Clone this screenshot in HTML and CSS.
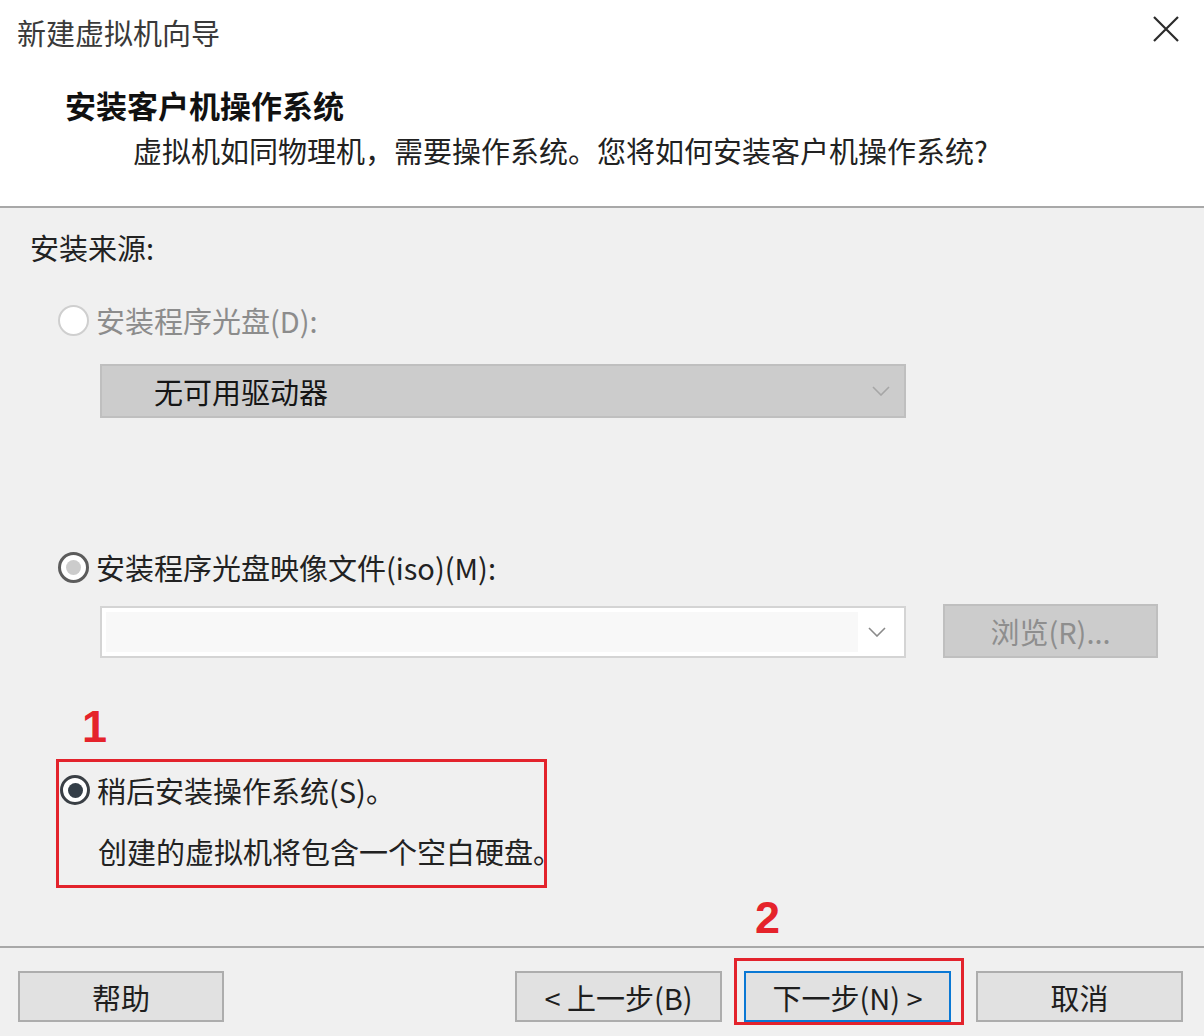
FILE: index.html
```html
<!DOCTYPE html>
<html lang="zh-CN">
<head>
<meta charset="utf-8">
<title>新建虚拟机向导</title>
<link rel="stylesheet" href="styles.css">
</head>
<body>
<div class="dialog">
  <header class="header">
    <div class="titlebar">
      <span class="title">新建虚拟机向导</span>
      <svg class="close" width="28" height="28" viewBox="0 0 28 28"><path d="M2 2L26 26M26 2L2 26" stroke="#2b2b2b" stroke-width="2.2" fill="none"/></svg>
    </div>
    <div class="heading">安装客户机操作系统</div>
    <div class="subtitle">虚拟机如同物理机，需要操作系统。您将如何安装客户机操作系统?</div>
  </header>

  <main class="content">
    <div class="label">安装来源:</div>

    <div class="option disabled"><span class="radio radio-off"></span><span>安装程序光盘(D):</span></div>
    <div class="select">
      <span>无可用驱动器</span>
      <svg class="chev" width="18" height="10" viewBox="0 0 18 10"><path d="M1 1L9 9L17 1" stroke="#a6a6a6" stroke-width="1.6" fill="none"/></svg>
    </div>

    <div class="option option-iso"><span class="radio radio-dim"></span><span>安装程序光盘映像文件(iso)(M):</span></div>
    <div class="iso-row">
      <div class="combo">
        <div class="combo-field"></div>
        <svg class="chev" width="18" height="10" viewBox="0 0 18 10"><path d="M1 1L9 9L17 1" stroke="#8a8a8a" stroke-width="1.6" fill="none"/></svg>
      </div>
      <div class="browse">浏览(R)...</div>
    </div>

    <div class="mark mark-1">1</div>
    <div class="callout">
      <div class="option"><span class="radio radio-on"></span><span>稍后安装操作系统(S)。</span></div>
      <div class="desc">创建的虚拟机将包含一个空白硬盘。</div>
    </div>
    <div class="mark mark-2">2</div>
  </main>

  <footer class="footer">
    <div class="btn btn-help">帮助</div>
    <div class="btn">&lt; 上一步(B)</div>
    <div class="btn btn-next">下一步(N) &gt;</div>
    <div class="btn">取消</div>
  </footer>
</div>
</body>
</html>
```

FILE: styles.css
```css
* { box-sizing: border-box; }

html, body {
  margin: 0;
  padding: 0;
  background: #f0f0f0;
}

body {
  font-family: "Noto Sans CJK SC", "Noto Sans", sans-serif;
  font-size: 29px;
  color: #1e1e1e;
}

.dialog {
  width: 1204px;
  height: 1036px;
  display: flex;
  flex-direction: column;
  overflow: hidden;
}

/* header */
.header {
  height: 208px;
  background: #ffffff;
  border-bottom: 2px solid #a8a8a8;
  flex: none;
}

.titlebar {
  display: flex;
  justify-content: space-between;
  align-items: center;
  padding: 12px 24px 0 17px;
  height: 52px;
}

.title {
  line-height: 40px;
  color: #3a3a3a;
}

.close {
  display: block;
  margin-top: -6px;
}

.heading {
  margin: 33px 0 0 65px;
  font-size: 31px;
  font-weight: 700;
  line-height: 40px;
  color: #111;
}

.subtitle {
  margin: 5px 0 0 133px;
  line-height: 40px;
  color: #222;
}

/* content */
.content {
  height: 738px;
  flex: none;
  padding-top: 19px;
}

.label {
  margin-left: 30px;
  line-height: 40px;
  color: #222;
}

.option {
  display: flex;
  align-items: center;
  gap: 7px;
  height: 40px;
  line-height: 40px;
  margin-left: 58px;
  white-space: nowrap;
  color: #222;
}

.option.disabled {
  margin-top: 33px;
  color: #8c8c8c;
}

.option-iso {
  margin-top: 129px;
}

.radio {
  flex: none;
  width: 31px;
  height: 31px;
  border-radius: 50%;
  display: flex;
  align-items: center;
  justify-content: center;
  background: #fff;
}

.radio-off {
  border: 2px solid #cfcfcf;
}

.radio-dim {
  border: 3px solid #5c5c5c;
}

.radio-dim::after {
  content: "";
  width: 15px;
  height: 15px;
  border-radius: 50%;
  background: #cccccc;
}

.radio-on {
  border: 3px solid #3a3f45;
  margin-left: 1px;
  width: 30px;
  height: 30px;
}

.radio-on::after {
  content: "";
  width: 15px;
  height: 15px;
  border-radius: 50%;
  background: #343e48;
}

.select {
  margin: 24px 0 0 100px;
  width: 806px;
  height: 54px;
  background: #cccccc;
  border: 2px solid #bfbfbf;
  display: flex;
  align-items: center;
  justify-content: space-between;
  padding: 0 14px 0 52px;
  color: #151515;
}

.iso-row {
  display: flex;
  align-items: flex-end;
  margin: 17px 0 0 100px;
  height: 54px;
}

.combo {
  width: 806px;
  height: 52px;
  background: #ffffff;
  border: 2px solid #d4d4d4;
  display: flex;
  align-items: center;
  padding: 4px 14px 4px 4px;
  gap: 10px;
}

.combo-field {
  align-self: stretch;
  width: 752px;
  background: #f8f8f8;
}

.browse {
  margin-left: 37px;
  width: 215px;
  height: 54px;
  background: #cccccc;
  border: 2px solid #bfbfbf;
  color: #8e8e8e;
  display: flex;
  align-items: center;
  justify-content: center;
}

/* annotations */
.mark {
  font-family: "Liberation Sans", Arial, sans-serif;
  font-weight: 700;
  font-size: 45px;
  line-height: 44px;
  height: 44px;
  color: #e5232b;
}

.mark-1 {
  margin: 47px 0 0 82px;
}

.mark-2 {
  margin: 8px 0 0 755px;
}

.callout {
  margin: 10px 0 0 56px;
  width: 491px;
  height: 129px;
  border: 3px solid #e3232c;
  padding-top: 8px;
}

.callout .option {
  margin-left: 0;
}

.desc {
  margin: 21px 0 0 39px;
  line-height: 40px;
  white-space: nowrap;
  color: #222;
}

/* footer */
.footer {
  flex: 1;
  border-top: 2px solid #a8a8a8;
  display: flex;
  align-items: flex-start;
  padding: 23px 21px 0 18px;
  gap: 22px;
}

.btn {
  width: 207px;
  height: 51px;
  background: #e1e1e1;
  border: 2px solid #adadad;
  display: flex;
  align-items: center;
  justify-content: center;
  color: #1e1e1e;
  white-space: nowrap;
}

.btn-help {
  margin-right: auto;
  width: 206px;
}

.btn-next {
  position: relative;
  border-color: #0a78d4;
  margin-right: 3px;
}

.btn-next::after {
  content: "";
  position: absolute;
  top: -15px;
  left: -12px;
  right: -15px;
  bottom: -5px;
  border: 3px solid #e3232c;
}
```
